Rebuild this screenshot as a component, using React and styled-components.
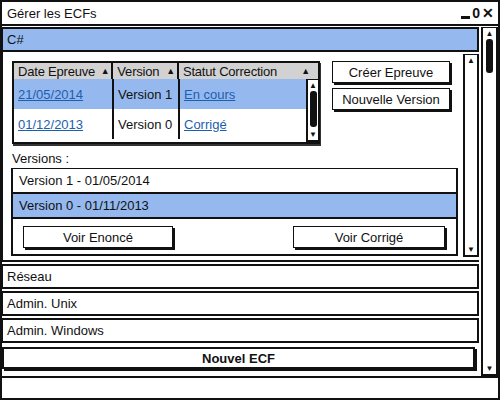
import React from "react";
import styled, { createGlobalStyle } from "styled-components";

const Global = createGlobalStyle`
  html, body {
    margin: 0;
    padding: 0;
    background: #ffffff;
  }
  body {
    font-family: "Liberation Sans", Arial, sans-serif;
    font-size: 13px;
    color: #111;
  }
`;

const BLUE = "#95b9ee";

export default function App() {
  return (
    <>
      <Global />
      <Window>
        <TitleBar>
          <span>Gérer les ECFs</span>
          <WinControls>
            <Minimize />
            <span>0</span>
            <span>✕</span>
          </WinControls>
        </TitleBar>
        <Body>
          <Main>
            <AccordionHeader $active>C#</AccordionHeader>
            <Panel>
              <PanelContent>
                <TopRow>
                  <Table>
                    <HeadRow>
                      <HeadCell $w={100}>
                        Date Epreuve<Arrow>▲</Arrow>
                      </HeadCell>
                      <HeadCell $w={66}>
                        Version<Arrow>▲</Arrow>
                      </HeadCell>
                      <HeadCell $w={140} $last>
                        Statut Correction<Arrow $pad>▲</Arrow>
                      </HeadCell>
                    </HeadRow>
                    <TableBody>
                      <Rows>
                        <Row $selected>
                          <Cell $w={100}>
                            <Link>21/05/2014</Link>
                          </Cell>
                          <Cell $w={66}>Version 1</Cell>
                          <Cell $w={126} $last>
                            <Link>En cours</Link>
                          </Cell>
                        </Row>
                        <Row>
                          <Cell $w={100}>
                            <Link>01/12/2013</Link>
                          </Cell>
                          <Cell $w={66}>Version 0</Cell>
                          <Cell $w={126} $last>
                            <Link>Corrigé</Link>
                          </Cell>
                        </Row>
                        <Row $filler />
                      </Rows>
                      <Scrollbar $w={14} $thumbH={36} />
                    </TableBody>
                  </Table>
                  <ButtonCol>
                    <Button $w={118}>Créer Epreuve</Button>
                    <Button $w={118}>Nouvelle Version</Button>
                  </ButtonCol>
                </TopRow>
                <Label>Versions :</Label>
                <ListBox>
                  <ListItem>Version 1 - 01/05/2014</ListItem>
                  <ListItem $selected>Version 0 - 01/11/2013</ListItem>
                  <ListActions>
                    <Button $w={150}>Voir Enoncé</Button>
                    <Button $w={152}>Voir Corrigé</Button>
                  </ListActions>
                </ListBox>
              </PanelContent>
              <Scrollbar $w={16} $thumbH={0} />
            </Panel>
            <AccordionHeader>Réseau</AccordionHeader>
            <AccordionHeader>Admin. Unix</AccordionHeader>
            <AccordionHeader>Admin. Windows</AccordionHeader>
            <WideButton>Nouvel ECF</WideButton>
          </Main>
          <Scrollbar $w={17} $thumbH={34} />
        </Body>
        <StatusBar />
      </Window>
    </>
  );
}

function Scrollbar({ $w, $thumbH }) {
  return (
    <Track $w={$w}>
      <ScrollBtn>▲</ScrollBtn>
      <TrackSpace>{$thumbH > 0 && <Thumb style={{ height: $thumbH }} />}</TrackSpace>
      <ScrollBtn>▼</ScrollBtn>
    </Track>
  );
}

const Window = styled.div`
  width: 500px;
  height: 400px;
  box-sizing: border-box;
  border: 2px solid #111;
  display: flex;
  flex-direction: column;
  overflow: hidden;
`;

const TitleBar = styled.div`
  height: 22px;
  flex: none;
  display: flex;
  align-items: center;
  justify-content: space-between;
  padding: 0 4px 0 5px;
  font-size: 13px;
  border-bottom: 2px solid #111;
`;

const WinControls = styled.div`
  display: flex;
  align-items: center;
  gap: 2px;
  font-size: 14px;
  font-weight: bold;
  span {
    line-height: 1;
  }
`;

const Minimize = styled.div`
  width: 9px;
  height: 3px;
  background: #111;
  margin-top: 9px;
`;

const Body = styled.div`
  flex: 1;
  display: flex;
  min-height: 0;
  gap: 2px;
  padding: 1px 0 0 0;
`;

const Main = styled.div`
  flex: 1;
  display: flex;
  flex-direction: column;
  min-width: 0;
`;

const AccordionHeader = styled.div`
  height: 25px;
  flex: none;
  box-sizing: border-box;
  border: 2px solid #111;
  border-left-width: 1px;
  margin-bottom: 2px;
  background: ${(p) => (p.$active ? BLUE : "#fff")};
  display: flex;
  align-items: center;
  padding-left: 4px;
  font-size: 13px;
`;

const Panel = styled.div`
  height: 203px;
  flex: none;
  display: flex;
  padding: 2px 0 3px 0;
  margin-top: -2px;
  margin-bottom: 2px;
  border-left: 1px solid #111;
  border-bottom: 2px solid #111;
`;

const PanelContent = styled.div`
  flex: 1;
  padding: 7px 3px 0 9px;
  display: flex;
  flex-direction: column;
`;

const TopRow = styled.div`
  display: flex;
  align-items: flex-start;
  gap: 12px;
`;

const Table = styled.div`
  width: 308px;
  box-sizing: border-box;
  border: 2px solid #111;
  box-shadow: 1px 2px 0 #333;
  display: flex;
  flex-direction: column;
`;

const HeadRow = styled.div`
  display: flex;
  height: 16px;
  background: #d2d2d2;
`;

const HeadCell = styled.div`
  width: ${(p) => p.$w}px;
  box-sizing: border-box;
  display: flex;
  align-items: center;
  justify-content: space-between;
  padding: 0 2px 0 4px;
  border-right: ${(p) => (p.$last ? "none" : "2px solid #111")};
  white-space: nowrap;
  font-size: 13px;
  letter-spacing: -0.2px;
`;

const Arrow = styled.span`
  font-size: 9px;
  margin-right: ${(p) => (p.$pad ? "6px" : "0")};
`;

const TableBody = styled.div`
  display: flex;
  height: 63px;
`;

const Rows = styled.div`
  flex: 1;
  display: flex;
  flex-direction: column;
`;

const Row = styled.div`
  display: flex;
  height: ${(p) => (p.$filler ? "auto" : "30px")};
  flex: ${(p) => (p.$filler ? "1" : "none")};
  background: ${(p) => (p.$selected ? BLUE : "#fff")};
`;

const Cell = styled.div`
  width: ${(p) => p.$w}px;
  box-sizing: border-box;
  display: flex;
  align-items: center;
  padding-left: 4px;
  border-right: ${(p) => (p.$last ? "none" : "2px solid #111")};
  font-size: 13px;
  white-space: nowrap;
`;

const Link = styled.span`
  color: #1b5fae;
  text-decoration: underline;
`;

const ButtonCol = styled.div`
  display: flex;
  flex-direction: column;
  gap: 5px;
`;

const Button = styled.div`
  width: ${(p) => p.$w}px;
  height: 22px;
  box-sizing: border-box;
  border: 1.5px solid #111;
  box-shadow: 2px 2px 0 #111;
  background: #fff;
  display: flex;
  align-items: center;
  justify-content: center;
  font-size: 13px;
`;

const Label = styled.div`
  margin-top: 8px;
  font-size: 13px;
  height: 14px;
  line-height: 14px;
`;

const ListBox = styled.div`
  margin-top: 2px;
  margin-left: -1px;
  margin-right: 2px;
  box-sizing: border-box;
  border: 2px solid #111;
  border-top-width: 1.5px;
  display: flex;
  flex-direction: column;
  flex: 1;
  margin-bottom: 1px;
`;

const ListItem = styled.div`
  height: 25px;
  box-sizing: border-box;
  border-bottom: 2px solid #111;
  background: ${(p) => (p.$selected ? BLUE : "#fff")};
  display: flex;
  align-items: center;
  padding-left: 6px;
  font-size: 13px;
`;

const ListActions = styled.div`
  display: flex;
  justify-content: space-between;
  padding: 7px 11px 0 10px;
`;

const Track = styled.div`
  width: ${(p) => p.$w}px;
  flex: none;
  box-sizing: border-box;
  border: 2px solid #111;
  border-top-width: 1px;
  background: #fff;
  display: flex;
  flex-direction: column;
  align-items: center;
`;

const ScrollBtn = styled.div`
  font-size: 8px;
  line-height: 11px;
  height: 11px;
  width: 100%;
  text-align: center;
`;

const TrackSpace = styled.div`
  flex: 1;
  width: 100%;
  display: flex;
  justify-content: center;
`;

const Thumb = styled.div`
  width: 7px;
  background: #111;
  border-radius: 3px;
`;

const WideButton = styled.div`
  margin-top: 2px;
  height: 22px;
  flex: none;
  box-sizing: border-box;
  border: 2px solid #111;
  box-shadow: 2px 2px 0 #111;
  margin-right: 4px;
  display: flex;
  align-items: center;
  justify-content: center;
  font-weight: bold;
  font-size: 13px;
`;

const StatusBar = styled.div`
  height: 22px;
  flex: none;
  box-sizing: border-box;
  border-top: 2px solid #111;
`;
